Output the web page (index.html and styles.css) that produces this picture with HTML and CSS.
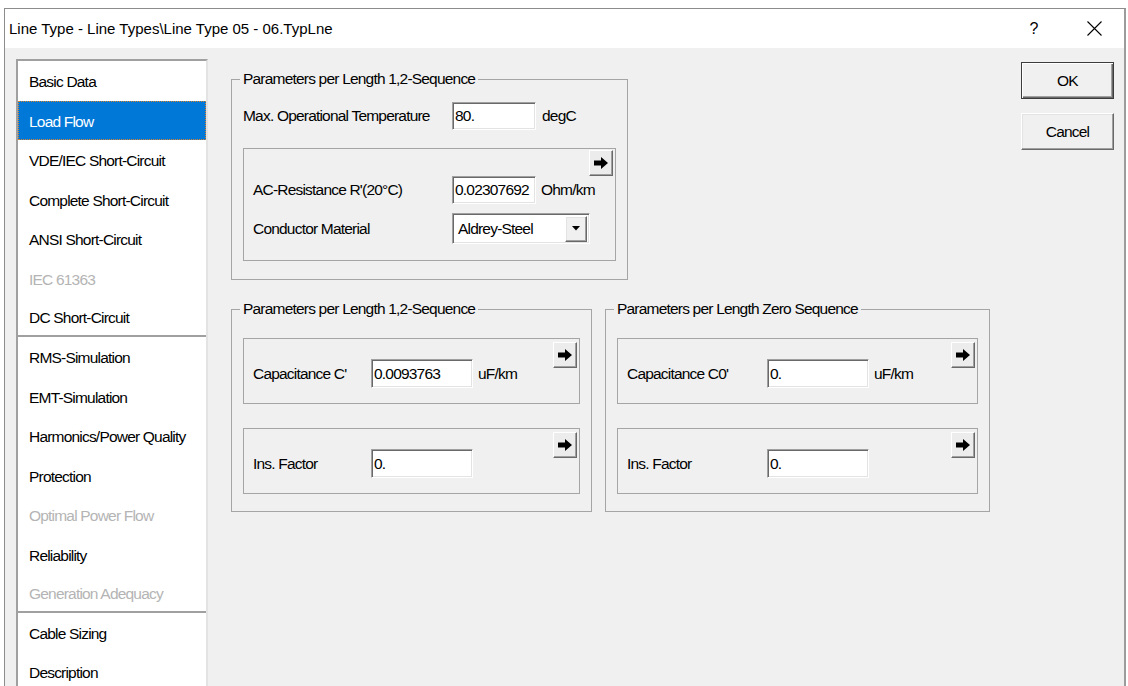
FILE: index.html
```html
<!DOCTYPE html>
<html lang="en">
<head>
<meta charset="utf-8">
<title>Line Type</title>
<link rel="stylesheet" href="styles.css">
</head>
<body>
<div class="window">
  <header class="titlebar">
    <span class="title">Line Type - Line Types\Line Type 05 - 06.TypLne</span>
    <div class="caption">
      <span class="cap-btn help">?</span>
      <span class="cap-btn">
        <svg class="close-x" width="15" height="15" viewBox="0 0 15 15"><path d="M0.5 0.5L14.5 14.5M14.5 0.5L0.5 14.5" stroke="#000" stroke-width="1.1" fill="none"/></svg>
      </span>
    </div>
  </header>

  <div class="main">
    <nav class="pages">
      <ul class="page-group">
        <li>Basic Data</li>
        <li class="sel">Load Flow</li>
        <li>VDE/IEC Short-Circuit</li>
        <li>Complete Short-Circuit</li>
        <li>ANSI Short-Circuit</li>
        <li class="off">IEC 61363</li>
        <li>DC Short-Circuit</li>
      </ul>
      <ul class="page-group">
        <li>RMS-Simulation</li>
        <li>EMT-Simulation</li>
        <li>Harmonics/Power Quality</li>
        <li>Protection</li>
        <li class="off">Optimal Power Flow</li>
        <li>Reliability</li>
        <li class="off">Generation Adequacy</li>
      </ul>
      <ul class="page-group">
        <li>Cable Sizing</li>
        <li>Description</li>
      </ul>
    </nav>

    <main class="sheet">
      <fieldset class="group g-temp">
        <legend>Parameters per Length 1,2-Sequence</legend>
        <div class="row">
          <span class="lbl w209">Max. Operational Temperature</span>
          <input class="box w84" value="80." readonly>
          <span class="unit">degC</span>
        </div>
        <div class="panel p-res">
          <div class="panel-head">
            <button class="jump" type="button"><svg width="14" height="12" viewBox="0 0 14 12"><path d="M0 3.5h7V0l7 6-7 6V8.5H0z" fill="#000"/></svg></button>
          </div>
          <div class="row">
            <span class="lbl w199">AC-Resistance R'(20°C)</span>
            <input class="box w84" value="0.02307692" readonly>
            <span class="unit u5">Ohm/km</span>
          </div>
          <div class="row r-gap">
            <span class="lbl w199">Conductor Material</span>
            <div class="combo">
              <span class="combo-text">Aldrey-Steel</span>
              <span class="combo-drop"><svg width="8" height="5" viewBox="0 0 8 5"><path d="M0 0h8L4 4.5z" fill="#000"/></svg></span>
            </div>
          </div>
        </div>
      </fieldset>

      <div class="group-row">
        <fieldset class="group g-pos">
          <legend>Parameters per Length 1,2-Sequence</legend>
          <div class="panel p-one first">
            <div class="panel-head">
              <button class="jump" type="button"><svg width="14" height="12" viewBox="0 0 14 12"><path d="M0 3.5h7V0l7 6-7 6V8.5H0z" fill="#000"/></svg></button>
            </div>
            <div class="row lift">
              <span class="lbl w118">Capacitance C'</span>
              <input class="box w102" value="0.0093763" readonly>
              <span class="unit u5">uF/km</span>
            </div>
          </div>
          <div class="panel p-one next">
            <div class="panel-head">
              <button class="jump" type="button"><svg width="14" height="12" viewBox="0 0 14 12"><path d="M0 3.5h7V0l7 6-7 6V8.5H0z" fill="#000"/></svg></button>
            </div>
            <div class="row lift">
              <span class="lbl w118">Ins. Factor</span>
              <input class="box w102" value="0." readonly>
            </div>
          </div>
        </fieldset>

        <fieldset class="group g-zero">
          <legend>Parameters per Length Zero Sequence</legend>
          <div class="panel p-one first">
            <div class="panel-head">
              <button class="jump" type="button"><svg width="14" height="12" viewBox="0 0 14 12"><path d="M0 3.5h7V0l7 6-7 6V8.5H0z" fill="#000"/></svg></button>
            </div>
            <div class="row lift">
              <span class="lbl w140">Capacitance C0'</span>
              <input class="box w102" value="0." readonly>
              <span class="unit u5">uF/km</span>
            </div>
          </div>
          <div class="panel p-one next">
            <div class="panel-head">
              <button class="jump" type="button"><svg width="14" height="12" viewBox="0 0 14 12"><path d="M0 3.5h7V0l7 6-7 6V8.5H0z" fill="#000"/></svg></button>
            </div>
            <div class="row lift">
              <span class="lbl w140">Ins. Factor</span>
              <input class="box w102" value="0." readonly>
            </div>
          </div>
        </fieldset>
      </div>
    </main>

    <aside class="actions">
      <button class="btn default" type="button">OK</button>
      <button class="btn" type="button">Cancel</button>
    </aside>
  </div>
</div>
</body>
</html>
```

FILE: styles.css
```css
html, body {
  margin: 0;
  height: 100%;
  overflow: hidden;
}

body {
  background: #ffffff;
  font-family: "Liberation Sans", Arial, sans-serif;
  font-size: 15.5px;
  letter-spacing: -0.8px;
  color: #000;
}

/* dialog frame */
.window {
  margin: 8px 0 0 4px;
  width: 1122px;
  height: 700px;
  box-sizing: border-box;
  border: 1px solid #8c8c8c;
  border-right: 2px solid #9c9c9c;
  background: #f0f0f0;
  display: flex;
  flex-direction: column;
}

.titlebar {
  height: 39px;
  flex: none;
  background: #fff;
  display: flex;
  align-items: center;
  padding-left: 4px;
}

.title {
  letter-spacing: 0;
  font-size: 15px;
}

.caption {
  margin-left: auto;
  display: flex;
  gap: 30px;
  padding-right: 15px;
}

.cap-btn {
  width: 30px;
  height: 30px;
  display: flex;
  align-items: center;
  justify-content: center;
}

.help {
  font-size: 16px;
  letter-spacing: 0;
}

.main {
  flex: 1;
  display: flex;
  padding: 11px 10px 0 11px;
  min-height: 0;
}

/* page list on the left */
.pages {
  width: 192px;
  flex: none;
  box-sizing: border-box;
  border: 2px solid;
  border-color: #a0a0a0 #e3e3e3 #e3e3e3 #a0a0a0;
  background: #fff;
}

.page-group {
  list-style: none;
  margin: 0;
  padding: 0;
}

.page-group + .page-group {
  border-top: 2px solid #a0a0a0;
}

.page-group li {
  height: 39.5px;
  box-sizing: border-box;
  padding: 3px 0 0 11px;
  display: flex;
  align-items: center;
  white-space: nowrap;
}

.page-group li:last-child {
  height: 37px;
}

.page-group li.off {
  color: #b4b4b4;
}

.page-group li.sel {
  background: #0078d7;
  color: #fff;
  outline: 1px dotted #d9822b;
  outline-offset: -1px;
}

/* property sheet */
.sheet {
  flex: 1;
  margin-left: 23px;
  padding-top: 11px;
}

.group {
  margin: 0;
  padding: 0 11px;
  border: 1px solid #a5a5a5;
  box-sizing: border-box;
  min-width: 0;
}

.group legend {
  padding: 0 3px;
  margin-left: -3px;
  line-height: 18px;
}

.g-temp {
  width: 397px;
  padding-bottom: 18px;
}

.group-row {
  display: flex;
  align-items: flex-start;
  gap: 13px;
  margin-top: 20px;
}

.g-pos {
  width: 361px;
  padding-bottom: 17px;
}

.g-zero {
  width: 385px;
  padding-bottom: 17px;
}

.row {
  display: flex;
  align-items: center;
}

.g-temp > .row {
  margin-top: 14px;
}

.lbl {
  flex: none;
  white-space: nowrap;
}

.w209 { width: 209px; }
.w199 { width: 199px; }
.w118 { width: 118px; }
.w140 { width: 140px; }

.box {
  flex: none;
  box-sizing: border-box;
  height: 28px;
  margin: 0;
  padding: 0 0 0 2px;
  border: 1px solid;
  border-color: #a0a0a0 #ffffff #ffffff #a0a0a0;
  box-shadow: inset 1px 1px #696969, inset -1px -1px #e3e3e3;
  background: #fff;
  font: inherit;
  letter-spacing: inherit;
  color: #000;
  outline: none;
}

.w84 { width: 84px; }
.w102 { width: 102px; height: 29px; }

.unit {
  margin-left: 6px;
  white-space: nowrap;
}

.unit.u5 { margin-left: 5px; }

/* inner framed panels */
.panel {
  border: 1px solid #a5a5a5;
  padding: 1px 2px 16px 9px;
}

.p-res {
  margin-top: 18px;
}

.panel-head {
  display: flex;
  justify-content: flex-end;
}

.r-gap {
  margin-top: 9px;
}

.p-one {
  padding-top: 3px;
  padding-bottom: 15px;
}

.p-one.first { margin-top: 20px; }
.p-one.next { margin-top: 24px; }

.p-one .lift {
  margin-top: -9px;
}

.jump {
  width: 24px;
  height: 26px;
  padding: 0;
  box-sizing: border-box;
  background: #ececec;
  border: 1px solid;
  border-color: #ffffff #696969 #696969 #ffffff;
  box-shadow: inset -1px -1px #a0a0a0;
  display: flex;
  align-items: center;
  justify-content: center;
}

/* combo box */
.combo {
  width: 138px;
  height: 31px;
  box-sizing: border-box;
  border: 1px solid;
  border-color: #a0a0a0 #ffffff #ffffff #a0a0a0;
  box-shadow: inset 1px 1px #696969, inset -1px -1px #e3e3e3;
  background: #fff;
  display: flex;
  align-items: center;
  padding: 2px;
}

.combo-text {
  padding-left: 3px;
}

.combo-drop {
  margin-left: auto;
  width: 22px;
  height: 26px;
  box-sizing: border-box;
  background: #f0f0f0;
  border: 1px solid;
  border-color: #ffffff #696969 #696969 #ffffff;
  box-shadow: inset -1px -1px #a0a0a0, inset 1px 1px #e3e3e3;
  display: flex;
  align-items: center;
  justify-content: center;
}

/* dialog buttons */
.actions {
  width: 93px;
  flex: none;
  display: flex;
  flex-direction: column;
  gap: 14px;
  margin-top: 3px;
}

.btn {
  width: 93px;
  height: 37px;
  box-sizing: border-box;
  padding: 0;
  background: #f0f0f0;
  border: 1px solid;
  border-color: #ffffff #696969 #696969 #ffffff;
  box-shadow: inset -1px -1px #a0a0a0, inset 1px 1px #e3e3e3;
  font: inherit;
  letter-spacing: inherit;
  color: #000;
}

.btn.default {
  border: 1px solid #3c3c3c;
  box-shadow: inset 1px 1px #ffffff, inset -1px -1px #696969, inset -2px -2px #a0a0a0;
}
```
